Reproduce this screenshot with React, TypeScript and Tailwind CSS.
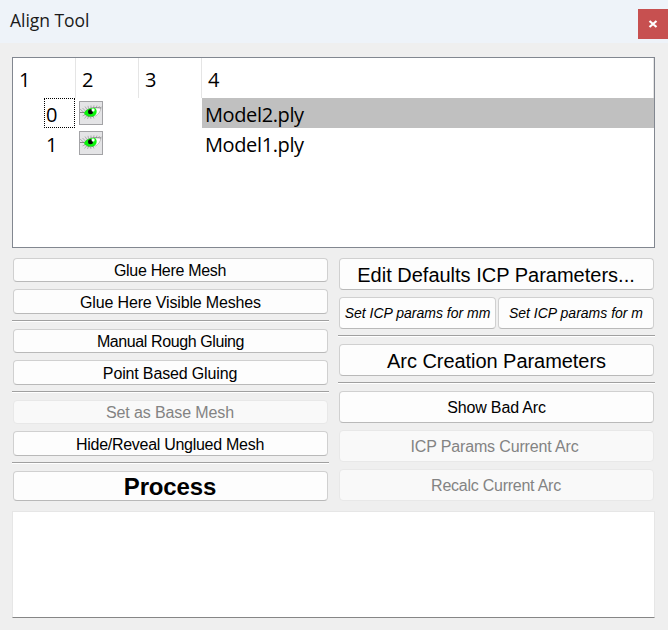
import React from "react";

const arial = "font-['Liberation_Sans',Arial,sans-serif]";
const segoe = "font-['Open_Sans','Noto_Sans',sans-serif]";

function ToolButton({ className = "", disabled = false, children }: { className?: string; disabled?: boolean; children: React.ReactNode }) {
  const tone = disabled
    ? "border-[#e8e8e8] bg-[#f9f9f9] text-[#838383]"
    : "border-[#d0d0d0] border-b-[#b9b9b9] bg-[#fdfdfd] text-black";
  return (
    <button disabled={disabled} className={`flex items-center justify-center whitespace-nowrap rounded-[4px] border leading-none ${tone} ${className}`}>
      {children}
    </button>
  );
}

function Separator({ className }: { className: string }) {
  return <div className={`-mx-px h-[2px] shrink-0 border-t border-b border-t-[#a0a0a0] border-b-white ${className}`} />;
}

function Eye() {
  return (
    <svg className="block h-6 w-6" viewBox="0 0 24 24">
      <rect x="0.5" y="0.5" width="23" height="23" fill="#e4e4e6" stroke="#a3a3a6" />
      <path d="M13 7.5C17 5.5 20 5.5 22 7C22 11 20 14.5 15.5 15.5Z" fill="#fcfcfc" />
      <path d="M22 7C21.5 10.5 19.5 14 16 15.2" fill="none" stroke="#aaa" strokeWidth="0.8" />
      <path d="M1 8L5 11.5M3.5 7L6.5 10M6 5.5L8 8.5M9 4.8L9.5 7.5M12 4.5V7M15 4.3L14.5 7M18 4.5L17 7M20.5 5L19.5 7M23 5.5L21.5 7M3.5 15L6.5 13.5M5.5 17.5L7.5 15M8.5 18L9.5 15.5M12 18L11.5 16M15 17.5L14 15.5" fill="none" stroke="#888" strokeWidth="0.6" />
      <path d="M1 11.5L5.5 11.5C9 6.5 15 6.3 22 7" fill="none" stroke="#6a6a6a" strokeWidth="0.8" />
      <path d="M5 12.2C6.5 8.7 10.5 7 16 7C18.4 9 18.3 12.6 15.5 14.7C12 16.5 7.5 15.6 5 12.2Z" fill="#0af40a" />
      <path d="M5.5 13C8 16 12 16.4 15.5 14.8" fill="none" stroke="#2e9a2e" strokeWidth="0.6" />
      <circle cx="11.5" cy="10.7" r="2.5" fill="#040804" />
      <rect x="12.7" y="7.6" width="2.8" height="3" rx="0.8" fill="#fff" />
    </svg>
  );
}

export default function App() {
  return (
    <div className="flex h-[630px] w-[668px] flex-col overflow-hidden bg-[#efefef] text-black">
      <header className="flex h-[43px] shrink-0 justify-between bg-[#eef3f9]">
        <h1 className={`pl-[10px] pt-[10px] text-[17.5px] leading-5 tracking-[-0.05px] text-[#1a1a1a] ${segoe}`}>Align Tool</h1>
        <button aria-label="Close" className="mt-[9px] flex h-[30px] w-[30px] items-center justify-center bg-[#c75050]">
          <svg className="h-2 w-[10px]" viewBox="0 0 10 8"><path d="M1.5 1L8.5 7M8.5 1L1.5 7" stroke="#fff" strokeWidth="2.2" /></svg>
        </button>
      </header>

      <section className={`ml-[12px] mt-[14px] h-[191px] w-[643px] shrink-0 border border-[#828790] bg-white text-[20px] leading-[30px] ${segoe}`}>
        <div className="flex h-10">
          <div className="w-[63px] border-r border-[#e5e5e5] pl-[6px] pt-[7px]">1</div>
          <div className="w-[63px] border-r border-[#e5e5e5] pl-[6px] pt-[7px]">2</div>
          <div className="w-[63px] border-r border-[#e5e5e5] pl-[6px] pt-[7px]">3</div>
          <div className="flex-1 border-r border-[#e5e5e5] pl-[6px] pt-[7px]">4</div>
        </div>
        <div className="flex h-[30px]">
          <div className="ml-[31px] flex h-[30px] w-[31px] items-center border border-dotted border-black pl-[1px] pt-[4px]">0</div>
          <div className="w-[127px] pl-[4px] pt-[3px]"><Eye /></div>
          <div className="flex-1 bg-[#c0c0c0] pl-[3px] pt-[2px] tracking-[-0.38px]">Model2.ply</div>
        </div>
        <div className="flex h-[30px]">
          <div className="ml-[31px] w-[31px] pl-[2px] pt-[2px]">1</div>
          <div className="w-[127px] pl-[4px] pt-[3px]"><Eye /></div>
          <div className="flex-1 pl-[3px] pt-[2px] tracking-[-0.38px]">Model1.ply</div>
        </div>
      </section>

      <main className={`ml-[13px] mt-[10px] flex h-[243px] shrink-0 items-start gap-[11px] text-[16px] ${arial}`}>
        <div className="flex w-[315px] flex-col">
          <ToolButton className="h-6 pt-[2px] pr-[1px] tracking-[-0.32px]">Glue Here Mesh</ToolButton>
          <ToolButton className="mt-[7px] h-[25px] pt-[2px] tracking-[-0.16px]">Glue Here Visible Meshes</ToolButton>
          <Separator className="mt-[6px]" />
          <ToolButton className="mt-[7px] h-6 pt-[2px] tracking-[-0.4px]">Manual Rough Gluing</ToolButton>
          <ToolButton className="mt-[7px] h-[25px] pt-[2px] pr-[1px] tracking-[-0.15px]">Point Based Gluing</ToolButton>
          <Separator className="mt-[6px]" />
          <ToolButton disabled className="mt-[7px] h-6 pt-[2px] pr-[1px] tracking-[-0.12px]">Set as Base Mesh</ToolButton>
          <ToolButton className="mt-[7px] h-[25px] pt-[2px] pr-[1px] tracking-[-0.28px]">Hide/Reveal Unglued Mesh</ToolButton>
          <Separator className="mt-[6px]" />
          <ToolButton className="mt-[7px] h-[30px] pt-[2px] pr-[1px] text-[24px] font-bold tracking-[-0.15px]">Process</ToolButton>
        </div>
        <div className="flex w-[315px] flex-col">
          <ToolButton className="h-8 pt-[2px] pr-[1px] text-[20px]">Edit Defaults ICP Parameters...</ToolButton>
          <div className="mt-[7px] flex gap-[2px] text-[14px] italic">
            <ToolButton className="h-8 w-[157px]">Set ICP params for mm</ToolButton>
            <ToolButton className="h-8 w-[156px]">Set ICP params for m</ToolButton>
          </div>
          <Separator className="mt-[6px]" />
          <ToolButton className="mt-[7px] h-8 pt-[2px] text-[20px] tracking-[-0.05px]">Arc Creation Parameters</ToolButton>
          <Separator className="mt-[6px]" />
          <ToolButton className="mt-[7px] h-8 pt-[2px] tracking-[-0.15px]">Show Bad Arc</ToolButton>
          <ToolButton disabled className="mt-[7px] h-8 pt-[2px] pr-[4px] tracking-[-0.15px]">ICP Params Current Arc</ToolButton>
          <ToolButton disabled className="mt-[7px] h-8 pt-[2px] pr-[1px] tracking-[-0.25px]">Recalc Current Arc</ToolButton>
        </div>
      </main>

      <section className="ml-[12px] mt-[10px] h-[107px] w-[643px] shrink-0 border border-[#e6e6e6] border-b-[#868686] bg-white" />
    </div>
  );
}
